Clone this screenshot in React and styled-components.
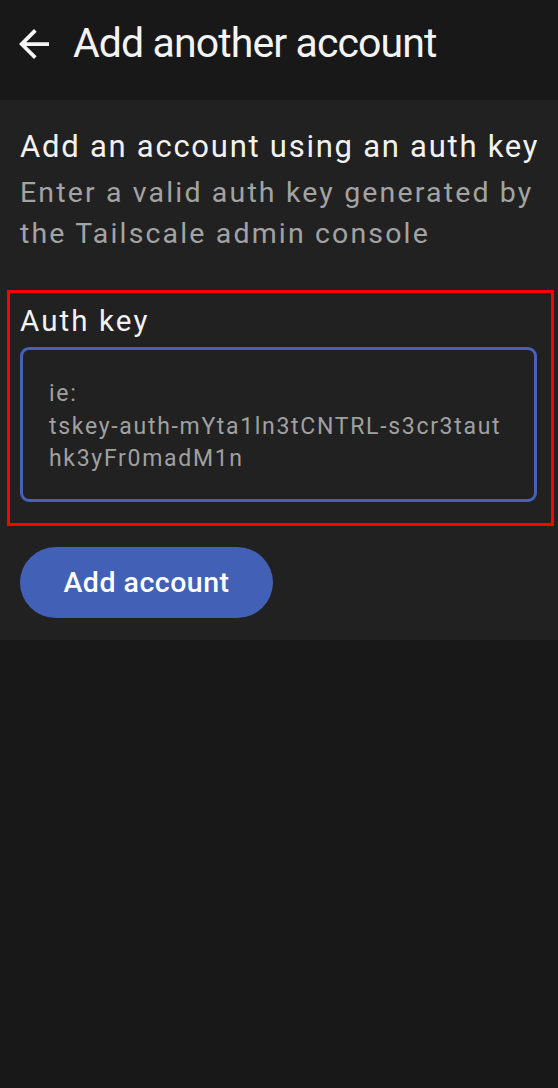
import styled, { createGlobalStyle } from 'styled-components';

const GlobalStyle = createGlobalStyle`
  html, body {
    margin: 0;
    padding: 0;
    background: #181818;
    font-family: Roboto, 'Liberation Sans', sans-serif;
  }
  body {
    min-height: 1088px;
  }
`;

const Screen = styled.div`
  width: 558px;
  min-height: 1088px;
  background: #181818;
`;

const TopBar = styled.div`
  height: 100px;
  display: flex;
  align-items: center;
  padding-left: 19px;
  gap: 24px;
  box-sizing: border-box;
`;

const BackButton = styled.div`
  width: 30px;
  height: 30px;
  display: flex;
  margin-bottom: 12px;
`;

const Title = styled.h1`
  margin: 0 0 14px;
  font-size: 41px;
  font-weight: 400;
  letter-spacing: -0.9px;
  color: #f4f4f4;
  line-height: 44px;
  white-space: nowrap;
`;

const Panel = styled.div`
  background: #212121;
  padding: 27px 20px 22px;
  display: flex;
  flex-direction: column;
  align-items: flex-start;
`;

const Heading = styled.div`
  font-size: 31px;
  line-height: 40px;
  letter-spacing: 1.75px;
  color: #f2f2f2;
  margin-bottom: 5px;
  white-space: nowrap;
`;

const Description = styled.div`
  font-size: 28.5px;
  line-height: 41px;
  letter-spacing: 2.15px;
  color: #a3a3a3;
  white-space: nowrap;
`;

const Highlight = styled.div`
  align-self: stretch;
  margin: 36px -16px 0 -13px;
  border: 3px solid #ff0000;
  padding: 10px 14px 21px 10px;
  display: flex;
  flex-direction: column;
  gap: 8px;
`;

const Label = styled.div`
  font-size: 29.5px;
  line-height: 36px;
  letter-spacing: 2.1px;
  color: #f2f2f2;
`;

const KeyField = styled.div`
  height: 155px;
  box-sizing: border-box;
  border: 3px solid #4662b4;
  border-radius: 9px;
  padding: 28px 26px 0 26px;
  font-size: 23px;
  line-height: 32.5px;
  letter-spacing: 1.7px;
  color: #a0a0a0;
  word-break: break-all;
`;

const PrimaryButton = styled.button`
  margin-top: 21px;
  width: 253px;
  height: 71px;
  border: none;
  border-radius: 36px;
  background: #4160b6;
  color: #ffffff;
  font-family: Roboto, 'Liberation Sans', sans-serif;
  font-size: 28.5px;
  font-weight: 500;
  letter-spacing: 0.5px;
  cursor: pointer;
`;

function BackArrow() {
  return (
    <svg width="30" height="30" viewBox="4 4 16 16" fill="#f4f4f4">
      <path d="M20 11H7.83l5.59-5.59L12 4l-8 8 8 8 1.41-1.41L7.83 13H20v-2z" />
    </svg>
  );
}

export default function App() {
  return (
    <Screen>
      <GlobalStyle />
      <TopBar>
        <BackButton>
          <BackArrow />
        </BackButton>
        <Title>Add another account</Title>
      </TopBar>
      <Panel>
        <Heading>Add an account using an auth key</Heading>
        <Description>
          Enter a valid auth key generated by
          <br />
          the Tailscale admin console
        </Description>
        <Highlight>
          <Label>Auth key</Label>
          <KeyField>
            ie:
            <br />
            tskey-auth-mYta1ln3tCNTRL-s3cr3tauthk3yFr0madM1n
          </KeyField>
        </Highlight>
        <PrimaryButton>Add account</PrimaryButton>
      </Panel>
    </Screen>
  );
}
